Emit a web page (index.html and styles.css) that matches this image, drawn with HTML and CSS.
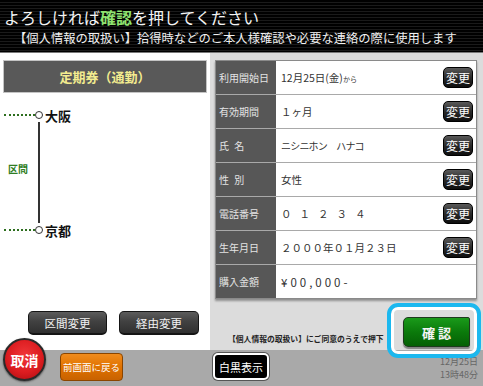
FILE: index.html
```html
<!DOCTYPE html>
<html lang="ja">
<head>
<meta charset="utf-8">
<link rel="stylesheet" href="styles.css">
</head>
<body>
<div class="screen">
  <header class="head">
    <h1 class="title">よろしければ<em>確認</em>を押してください</h1>
    <p class="sub">【個人情報の取扱い】拾得時などのご本人様確認や必要な連絡の際に使用します</p>
  </header>
  <main class="main">
    <section class="left">
      <div class="ticket">定期券（通勤）</div>
      <div class="route">
        <div class="stop"><span class="dots"></span><span class="node"></span><span class="name">大阪</span></div>
        <div class="seg"><span class="seg-label">区間</span><span class="seg-line"></span></div>
        <div class="stop"><span class="dots"></span><span class="node"></span><span class="name">京都</span></div>
      </div>
      <div class="left-btns">
        <button class="dark-btn">区間変更</button>
        <button class="dark-btn wide">経由変更</button>
      </div>
    </section>
    <section class="right">
      <div class="table">
        <div class="row"><div class="lbl">利用開始日</div><div class="val">12月25日(金)<small>から</small></div><button class="chg">変更</button></div>
        <div class="row"><div class="lbl">有効期間</div><div class="val">１ヶ月</div><button class="chg">変更</button></div>
        <div class="row"><div class="lbl">氏 名</div><div class="val kana">ニシニホン　ハナコ</div><button class="chg">変更</button></div>
        <div class="row"><div class="lbl">性 別</div><div class="val">女性</div><button class="chg">変更</button></div>
        <div class="row"><div class="lbl">電話番号</div><div class="val spaced">０１２３４</div><button class="chg">変更</button></div>
        <div class="row"><div class="lbl">生年月日</div><div class="val">２０００年０１月２３日</div><button class="chg">変更</button></div>
        <div class="row"><div class="lbl">購入金額</div><div class="val price">¥00,000-</div></div>
      </div>
      <div class="confirm-row">
        <p class="note">【個人情報の取扱い】にご同意のうえで押下</p>
        <button class="confirm">確 認</button>
      </div>
    </section>
  </main>
  <footer class="foot">
    <button class="cancel">取消</button>
    <button class="back">前画面に戻る</button>
    <button class="mono">白黒表示</button>
    <div class="clock"><span class="clock-line">12月25日</span><span class="clock-line">13時48分</span></div>
  </footer>
  <div class="focus-ring"></div>
</div>
</body>
</html>
```

FILE: styles.css
```css
html, body {
  margin: 0;
  padding: 0;
}
body {
  width: 483px;
  height: 386px;
  overflow: hidden;
  background: #fff;
  font-family: "Noto Sans CJK JP", "Noto Sans", sans-serif;
}
button {
  font-family: "Noto Sans CJK JP", "Noto Sans", sans-serif;
  padding: 0;
  margin: 0;
  cursor: pointer;
}
.screen {
  position: relative;
  width: 483px;
  height: 386px;
  display: flex;
  flex-direction: column;
}

/* header */
.head {
  height: 53px;
  box-sizing: border-box;
  border-bottom: 1px solid #7a7a7a;
  background: repeating-linear-gradient(to bottom, #000 0 2px, #1a1a1a 2px 3px);
  color: #fff;
  padding: 8px 0 0 4px;
}
.title {
  margin: 0;
  font-size: 16px;
  line-height: 18px;
  font-weight: 400;
  color: #f4f4f4;
}
.title em {
  font-style: normal;
  font-weight: 700;
  color: #8ee36f;
}
.sub {
  margin: 5px 0 0 10px;
  font-size: 12.3px;
  line-height: 14px;
  color: #f0f0f0;
  white-space: nowrap;
}

/* main */
.main {
  height: 297px;
  display: flex;
}
.left {
  width: 210px;
  background: #fff;
}
.ticket {
  margin: 7px 3px 0 3px;
  height: 33px;
  box-sizing: border-box;
  border: 1px solid #c4c4c4;
  background: #595959;
  color: #f3ec8f;
  font-weight: 700;
  font-size: 13px;
  display: flex;
  align-items: center;
  justify-content: center;
}
.route {
  margin-top: 15px;
}
.stop {
  display: flex;
  align-items: center;
  height: 14px;
  padding-left: 4px;
}
.dots {
  width: 31px;
  height: 0;
  border-top: 2px dotted #2d6e1e;
}
.node {
  width: 8px;
  height: 8px;
  box-sizing: border-box;
  border: 1.5px solid #333;
  border-radius: 50%;
  background: #fff;
}
.name {
  margin-left: 2px;
  font-size: 13px;
  font-weight: 700;
  color: #111;
}
.seg {
  display: flex;
  height: 101px;
}
.seg-label {
  width: 38px;
  box-sizing: border-box;
  padding: 0 0 9px 8px;
  display: flex;
  align-items: center;
  font-size: 10px;
  font-weight: 700;
  color: #2f7d23;
}
.seg-line {
  width: 2px;
  background: #333;
}
.left-btns {
  margin-top: 74px;
  padding-left: 28px;
  display: flex;
  gap: 12px;
}
.dark-btn {
  width: 79px;
  height: 24px;
  border: 1px solid #151515;
  border-bottom-width: 2px;
  border-radius: 5px;
  background: linear-gradient(to bottom, #5c5c5c 0%, #414141 45%, #303030 100%);
  color: #f2f2f2;
  font-size: 11.5px;
}
.dark-btn.wide {
  width: 80px;
}

/* right panel */
.right {
  flex: 1;
  background: #dcdcdc;
  padding: 7px 6px 0 5px;
}
.table {
  border: 1px solid #8a8a8a;
  box-shadow: 0 2px 2px rgba(0, 0, 0, 0.35);
  background: #fff;
}
.row {
  display: flex;
  align-items: center;
  height: 33px;
  border-top: 1px solid #a9a9a9;
}
.row:first-child {
  border-top: 0;
}
.lbl {
  width: 60px;
  height: 100%;
  box-sizing: border-box;
  padding-left: 3px;
  display: flex;
  align-items: center;
  background: #575757;
  color: #e4e4e4;
  font-size: 10px;
  white-space: pre;
  word-spacing: 3px;
}
.val {
  flex: 1;
  padding-left: 5px;
  font-size: 10.5px;
  color: #333;
  white-space: nowrap;
}
.val small {
  font-size: 7px;
}
.val.kana {
  font-size: 10px;
  letter-spacing: -0.8px;
}
.val.spaced {
  letter-spacing: 8px;
}
.val.price {
  font-size: 11.5px;
  letter-spacing: 3px;
}
.chg {
  width: 30px;
  height: 21px;
  margin-right: 3px;
  border: 1px solid #000;
  border-radius: 5px;
  background: linear-gradient(to bottom, #5a5a5a 0%, #2a2a2a 50%, #0e0e0e 100%);
  color: #fff;
  font-size: 12px;
  line-height: 19px;
}
.confirm-row {
  margin-top: 18px;
  display: flex;
  align-items: flex-end;
}
.note {
  margin: 0 0 3px 13px;
  font-size: 7.8px;
  font-weight: 700;
  color: #222;
  white-space: nowrap;
}
.confirm {
  margin-left: auto;
  margin-right: 7px;
  width: 67px;
  height: 30px;
  border: 1px solid #1e3a1e;
  border-radius: 5px 2px 2px 5px;
  background: linear-gradient(to bottom, #1a9a1a 0%, #0b7a0b 50%, #056005 100%);
  box-shadow: 0 2px 1px rgba(0, 0, 0, 0.4);
  color: #f4f4f4;
  font-size: 13px;
  font-weight: 700;
}

/* footer */
.foot {
  height: 36px;
  background: #a9a9a9;
  display: flex;
  align-items: flex-start;
}
.cancel {
  margin: -12px 0 0 3px;
  width: 43px;
  height: 43px;
  border-radius: 50%;
  border: 2px solid #2a2a2a;
  background: radial-gradient(circle at 50% 40%, #f0383a 0%, #dc1c20 55%, #a80c10 100%);
  box-shadow: 0 1px 2px rgba(0, 0, 0, 0.5);
  color: #fff;
  font-size: 14px;
  font-weight: 700;
  position: relative;
  z-index: 1;
}
.back {
  margin: 3px 0 0 14px;
  width: 63px;
  height: 28px;
  border: 1px solid #8a4500;
  border-radius: 4px;
  background: linear-gradient(to bottom, #f08c1e 0%, #e07200 50%, #c86200 100%);
  color: #fff;
  font-size: 9.5px;
}
.mono {
  margin: 3px 0 0 90px;
  width: 56px;
  height: 27px;
  box-sizing: border-box;
  border: 2px solid #fff;
  border-radius: 5px;
  background: #000;
  color: #fff;
  font-size: 11px;
  box-shadow: 0 0 0 1px #555;
}
.clock {
  margin: 5px 5px 0 auto;
  display: flex;
  flex-direction: column;
  align-items: flex-end;
  font-size: 9px;
  color: #666;
}
.clock-line {
  display: block;
  height: 13px;
  line-height: 13px;
}
.focus-ring {
  position: absolute;
  left: 387px;
  top: 303px;
  width: 94px;
  height: 55px;
  box-sizing: border-box;
  border: 4px solid #1bb8ef;
  border-radius: 11px;
  box-shadow: inset 0 0 0 3px #fff;
  pointer-events: none;
}
```
